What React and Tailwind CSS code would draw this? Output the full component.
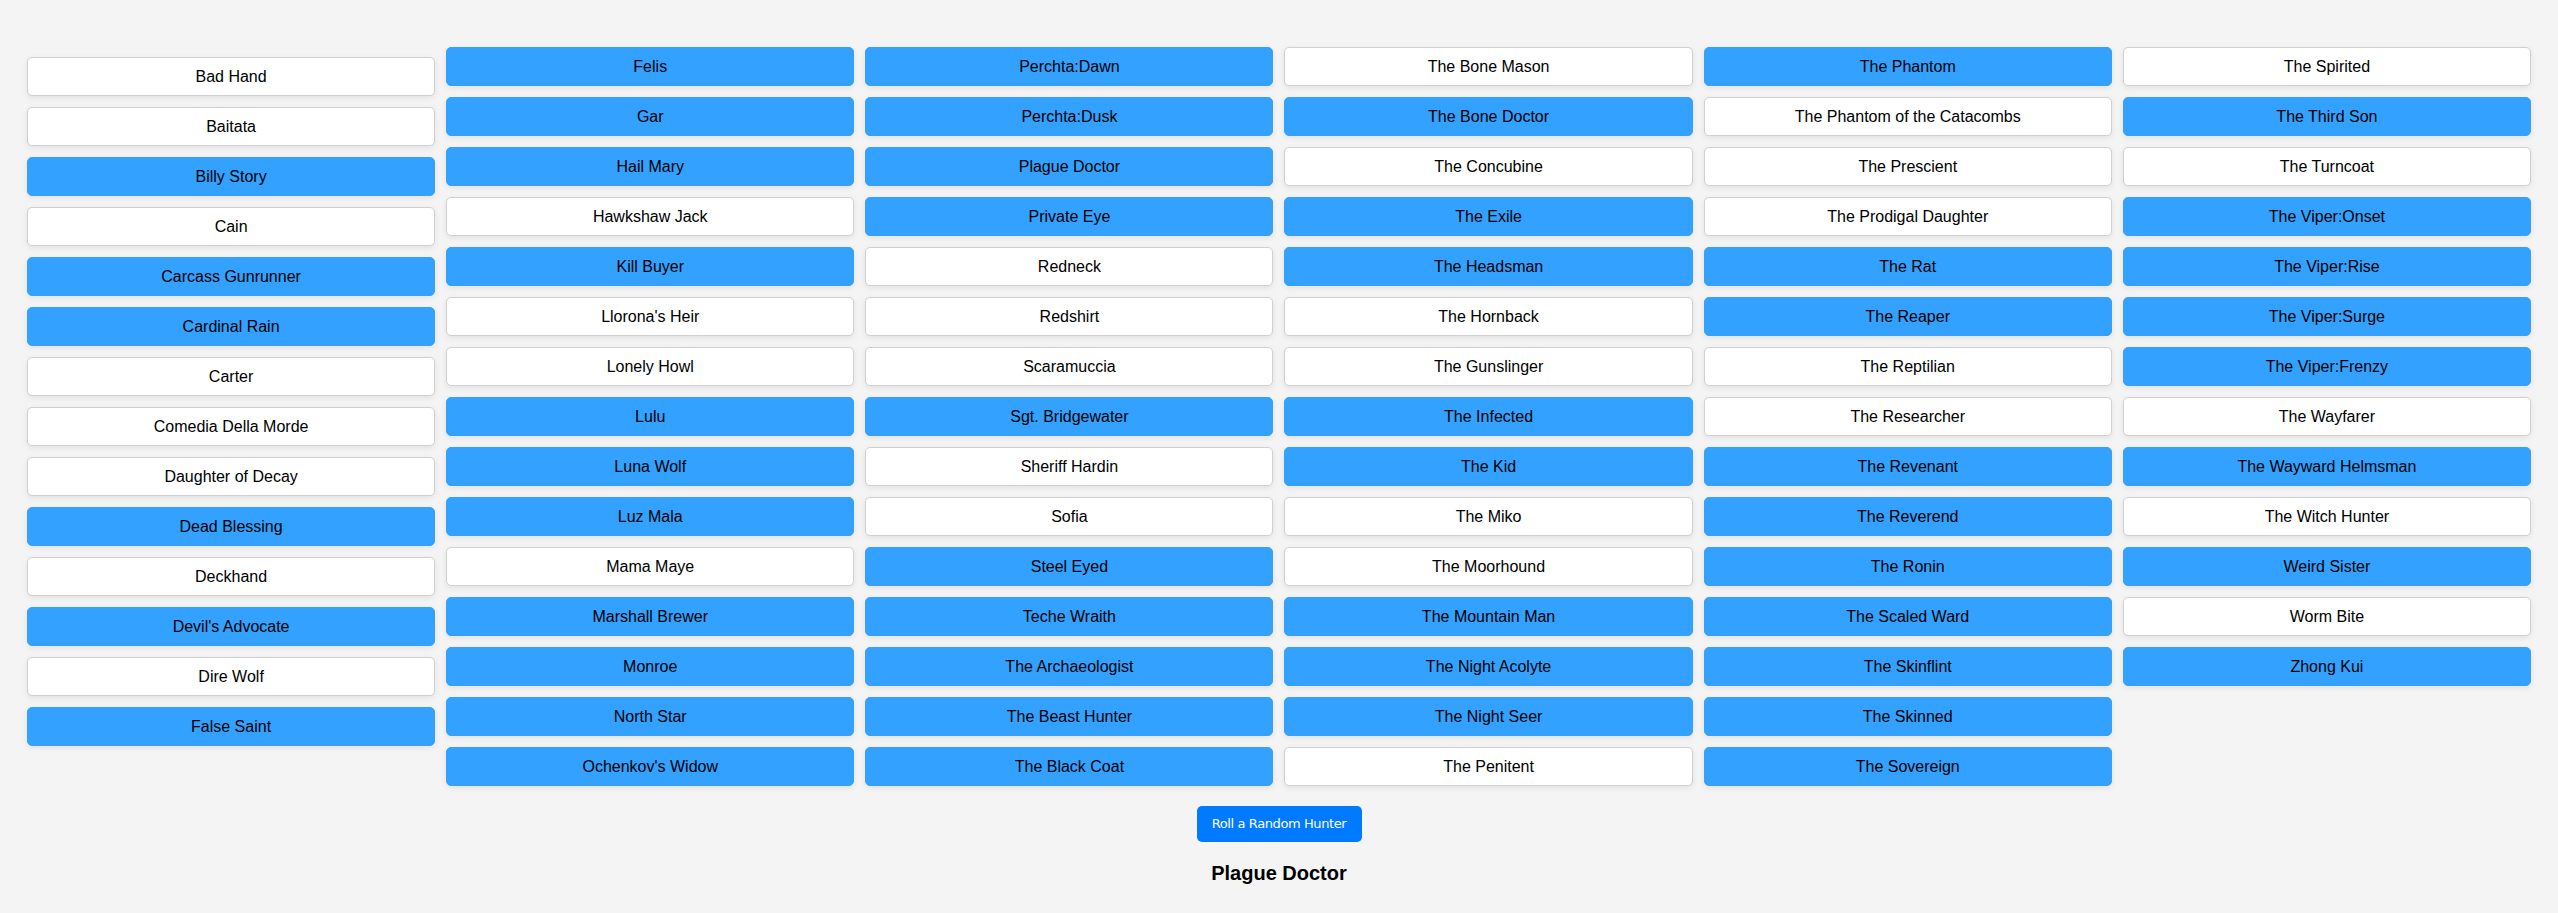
import React, { useState } from 'react';

const columns = [
  [
    ['Bad Hand', 0], ['Baitata', 0], ['Billy Story', 1], ['Cain', 0], ['Carcass Gunrunner', 1],
    ['Cardinal Rain', 1], ['Carter', 0], ['Comedia Della Morde', 0], ['Daughter of Decay', 0],
    ['Dead Blessing', 1], ['Deckhand', 0], ["Devil's Advocate", 1], ['Dire Wolf', 0], ['False Saint', 1],
  ],
  [
    ['Felis', 1], ['Gar', 1], ['Hail Mary', 1], ['Hawkshaw Jack', 0], ['Kill Buyer', 1],
    ["Llorona's Heir", 0], ['Lonely Howl', 0], ['Lulu', 1], ['Luna Wolf', 1], ['Luz Mala', 1],
    ['Mama Maye', 0], ['Marshall Brewer', 1], ['Monroe', 1], ['North Star', 1], ["Ochenkov's Widow", 1],
  ],
  [
    ['Perchta:Dawn', 1], ['Perchta:Dusk', 1], ['Plague Doctor', 1], ['Private Eye', 1], ['Redneck', 0],
    ['Redshirt', 0], ['Scaramuccia', 0], ['Sgt. Bridgewater', 1], ['Sheriff Hardin', 0], ['Sofia', 0],
    ['Steel Eyed', 1], ['Teche Wraith', 1], ['The Archaeologist', 1], ['The Beast Hunter', 1], ['The Black Coat', 1],
  ],
  [
    ['The Bone Mason', 0], ['The Bone Doctor', 1], ['The Concubine', 0], ['The Exile', 1], ['The Headsman', 1],
    ['The Hornback', 0], ['The Gunslinger', 0], ['The Infected', 1], ['The Kid', 1], ['The Miko', 0],
    ['The Moorhound', 0], ['The Mountain Man', 1], ['The Night Acolyte', 1], ['The Night Seer', 1], ['The Penitent', 0],
  ],
  [
    ['The Phantom', 1], ['The Phantom of the Catacombs', 0], ['The Prescient', 0], ['The Prodigal Daughter', 0],
    ['The Rat', 1], ['The Reaper', 1], ['The Reptilian', 0], ['The Researcher', 0], ['The Revenant', 1],
    ['The Reverend', 1], ['The Ronin', 1], ['The Scaled Ward', 1], ['The Skinflint', 1], ['The Skinned', 1],
    ['The Sovereign', 1],
  ],
  [
    ['The Spirited', 0], ['The Third Son', 1], ['The Turncoat', 0], ['The Viper:Onset', 1], ['The Viper:Rise', 1],
    ['The Viper:Surge', 1], ['The Viper:Frenzy', 1], ['The Wayfarer', 0], ['The Wayward Helmsman', 1],
    ['The Witch Hunter', 0], ['Weird Sister', 1], ['Worm Bite', 0], ['Zhong Kui', 1],
  ],
];

const HunterButton = ({ name, on }) => (
  <button
    className={`h-[39px] w-full rounded-[5px] border text-[16px] text-black shadow-[0_2px_6px_rgba(0,0,0,0.08)] ${
      on ? 'bg-[#33a1ff] border-[#3aa0f5]' : 'bg-white border-[#d0d0d0]'
    }`}
  >
    {name}
  </button>
);

export default function App() {
  const [picked] = useState('Plague Doctor');

  return (
    <div className="min-h-[913px] bg-[#f4f4f4] font-['Liberation_Sans',Arial,sans-serif]">
      {/* hunter columns */}
      <div className="grid grid-cols-6 gap-x-[11px] px-[27px] pt-[47px] items-start">
        {columns.map((col, i) => (
          <div key={i} className={`flex flex-col gap-[11px] ${i === 0 ? 'mt-[10px]' : ''}`}>
            {col.map(([name, on]) => (
              <HunterButton key={name} name={name} on={on === 1} />
            ))}
          </div>
        ))}
      </div>

      <div className="flex flex-col items-center pt-[20px]">
        <button className="h-[36px] w-[165px] rounded-[5px] bg-[#007bff] text-[13px] text-white font-['DejaVu_Sans',Tahoma,sans-serif] tracking-[-0.4px]">
          Roll a Random Hunter
        </button>
        <h2 className="mt-[20px] text-[20px] font-bold text-black leading-[23px]">{picked}</h2>
      </div>
    </div>
  );
}
